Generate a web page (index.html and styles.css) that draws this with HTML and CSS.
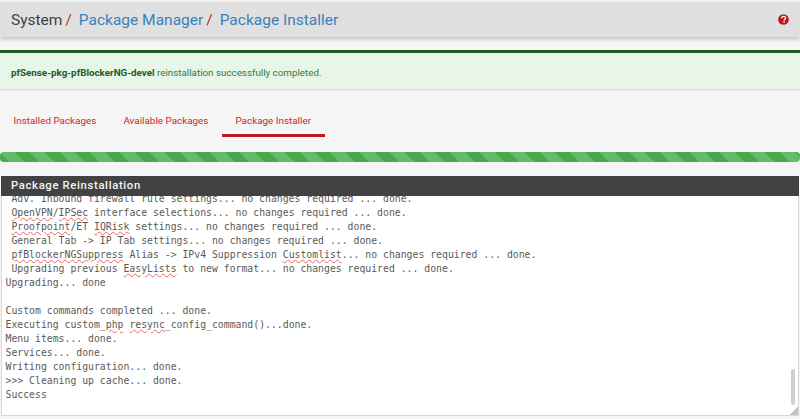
FILE: index.html
```html
<!DOCTYPE html>
<html lang="en">
<head>
<meta charset="utf-8">
<title>Package Installer</title>
<link rel="stylesheet" href="styles.css">
</head>
<body>
<header class="crumbbar">
  <h1 class="crumbs">
    <span class="crumb-root">System</span><span class="sep">/</span><a class="crumb-link">Package Manager</a><span class="sep">/</span><a class="crumb-link">Package Installer</a>
  </h1>
  <svg class="help" viewBox="0 0 12 12" aria-hidden="true">
    <circle cx="6" cy="6" r="5.8" fill="#b71c1c"/>
    <path d="M4 4.7c0-1.3 1-2 2.1-2s2 .7 2 1.8c0 1.4-1.5 1.4-1.5 2.5" fill="none" stroke="#fff" stroke-width="1.4"/>
    <rect x="5.8" y="7.9" width="1.6" height="1.5" fill="#fff"/>
  </svg>
</header>
<div class="alert"><strong>pfSense-pkg-pfBlockerNG-devel</strong> reinstallation successfully completed.</div>
<nav class="tabs">
  <a class="tab">Installed Packages</a>
  <a class="tab">Available Packages</a>
  <a class="tab active">Package Installer</a>
</nav>
<div class="progress"></div>
<section class="panel">
  <h2 class="panel-title">Package Reinstallation</h2>
  <div class="log">
<pre class="log-text"> Adv. Inbound firewall rule settings... no changes required ... done.
 <span class="sp">OpenVPN</span>/<span class="sp">IPSec</span> interface selections... no changes required ... done.
 <span class="sp">Proofpoint</span>/ET <span class="sp">IQRisk</span> settings... no changes required ... done.
 General Tab -&gt; IP Tab settings... no changes required ... done.
 <span class="sp">pfBlockerNGSuppress</span> Alias -&gt; IPv4 Suppression <span class="sp">Customlist</span>... no changes required ... done.
 Upgrading previous <span class="sp">EasyLists</span> to new format... no changes required ... done.
Upgrading... done

Custom commands completed ... done.
Executing custom_<span class="sp">php</span> <span class="sp">resync</span>_config_command()...done.
Menu items... done.
Services... done.
Writing configuration... done.
&gt;&gt;&gt; Cleaning up cache... done.
Success</pre>
    <div class="thumb"></div>
    <div class="grip"></div>
  </div>
</section>
</body>
</html>
```
FILE: styles.css
```css
* { box-sizing: border-box; }
html, body { margin: 0; height: 419px; overflow: hidden; }
body { background: #f5f5f5; font-family: Roboto, sans-serif; padding-top: 2px; }

.crumbbar {
  height: 35px;
  background: #e0e0e0;
  box-shadow: 0 2px 4px rgba(0,0,0,.22);
  display: flex;
  align-items: center;
  justify-content: space-between;
  padding: 0 11px;
}
.crumbs { margin: 0; font-size: 15.5px; font-weight: 400; color: #424242; white-space: nowrap; }
.crumb-link { color: #3a80ba; }
.sep { color: #c62828; margin: 0 7px 0 3px; }
.help { width: 11px; height: 11px; }

.alert {
  margin-top: 13px;
  height: 39px;
  border-top: 3px solid #1f5c24;
  background: #e8f5e9;
  box-shadow: 0 1px 2px rgba(0,0,0,.14);
  padding: 13px 11px 0;
  font-size: 9.8px;
  line-height: 14px;
  color: #2e7d32;
}
.alert strong { color: #1b5e20; font-weight: 700; }

.tabs { display: flex; margin-top: 9px; height: 39px; }
.tab {
  padding: 16px 13.5px 0;
  font-size: 9.9px;
  line-height: 13px;
  color: #c62828;
  white-space: nowrap;
}
.tab.active { border-bottom: 3px solid #b71c1c; }

.progress {
  margin-top: 15px;
  height: 10px;
  border-radius: 4px;
  background-color: #46a94b;
  background-image: linear-gradient(45deg, rgba(255,255,255,.18) 25%, transparent 25%, transparent 50%, rgba(255,255,255,.18) 50%, rgba(255,255,255,.18) 75%, transparent 75%, transparent);
  background-size: 30px 30px;
}

.panel { margin-top: 14px; padding: 0 1px; }
.panel-title {
  margin: 0;
  height: 20px;
  padding-left: 10px;
  background: #424242;
  color: #f5f5f5;
  font-size: 11.3px;
  font-weight: 500;
  line-height: 20px;
  letter-spacing: .65px;
}
.log {
  position: relative;
  height: 220px;
  background: #fff;
  border: 1px solid #d9d9d9;
  border-top: 0;
  overflow: hidden;
}
.log-text {
  margin: -4px 0 0;
  padding-left: 3.5px;
  font-family: "DejaVu Sans Mono", monospace;
  font-size: 9.8px;
  line-height: 14px;
  color: #5a5a5a;
}
.sp { text-decoration: underline wavy rgba(229,57,53,.75) 1px; }
.thumb {
  position: absolute;
  right: 3px;
  top: 173px;
  width: 4px;
  height: 36px;
  border-radius: 2px;
  background: #cfcfcf;
}
.grip {
  position: absolute;
  right: 0;
  bottom: 0;
  width: 8px;
  height: 8px;
  background: linear-gradient(135deg, transparent 50%, #c4c4c4 50%);
}
```
